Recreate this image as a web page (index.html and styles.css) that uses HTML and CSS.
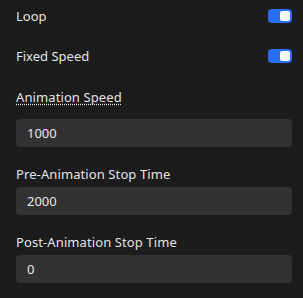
FILE: index.html
```html
<!DOCTYPE html>
<html>
<head>
<meta charset="utf-8">
<link rel="stylesheet" href="styles.css">
<title>Animation</title>
</head>
<body>
<div class="panel">
  <div class="switch-row">
    <span class="label">Loop</span>
    <span class="toggle on"><span class="knob"></span></span>
  </div>
  <div class="switch-row">
    <span class="label">Fixed Speed</span>
    <span class="toggle on"><span class="knob"></span></span>
  </div>

  <div class="field first">
    <div class="field-label"><span class="hint">Animation Speed</span></div>
    <div class="input">1000</div>
  </div>
  <div class="field">
    <div class="field-label">Pre-Animation Stop Time</div>
    <div class="input">2000</div>
  </div>
  <div class="field">
    <div class="field-label">Post-Animation Stop Time</div>
    <div class="input">0</div>
  </div>
</div>
</body>
</html>
```

FILE: styles.css
```css
html, body {
	margin: 0;
	background-color: #1c1c1c;
}
body {
	font-family: "Noto Sans", "Open Sans", sans-serif;
	font-size: 13px;
	color: #e3e3e3;
}
.panel {
	padding: 0 11px 0 16px;
}
.switch-row {
	display: flex;
	align-items: center;
	justify-content: space-between;
	height: 32px;
	margin-bottom: 8px;
}
.toggle {
	display: flex;
	align-items: center;
	width: 24px;
	height: 14px;
	border-radius: 4px;
	background-color: #555;
	box-sizing: border-box;
	padding: 2px;
}
.toggle.on {
	background-color: #2a6ef5;
	justify-content: flex-end;
}
.knob {
	width: 10px;
	height: 10px;
	border-radius: 2px;
	background-color: #fff;
}
.field {
	margin-top: 19px;
}
.field.first {
	margin-top: 17px;
}
.field-label {
	line-height: 16px;
	margin-bottom: 5px;
	letter-spacing: 0.1px;
}
.field.first .field-label {
	margin-bottom: 14px;
}
.hint {
	text-decoration: underline dotted;
	text-underline-offset: 2px;
}
.input {
	height: 28px;
	line-height: 28px;
	border-radius: 4px;
	background-color: #323232;
	padding-left: 11px;
	color: #e6e6e6;
}
```
